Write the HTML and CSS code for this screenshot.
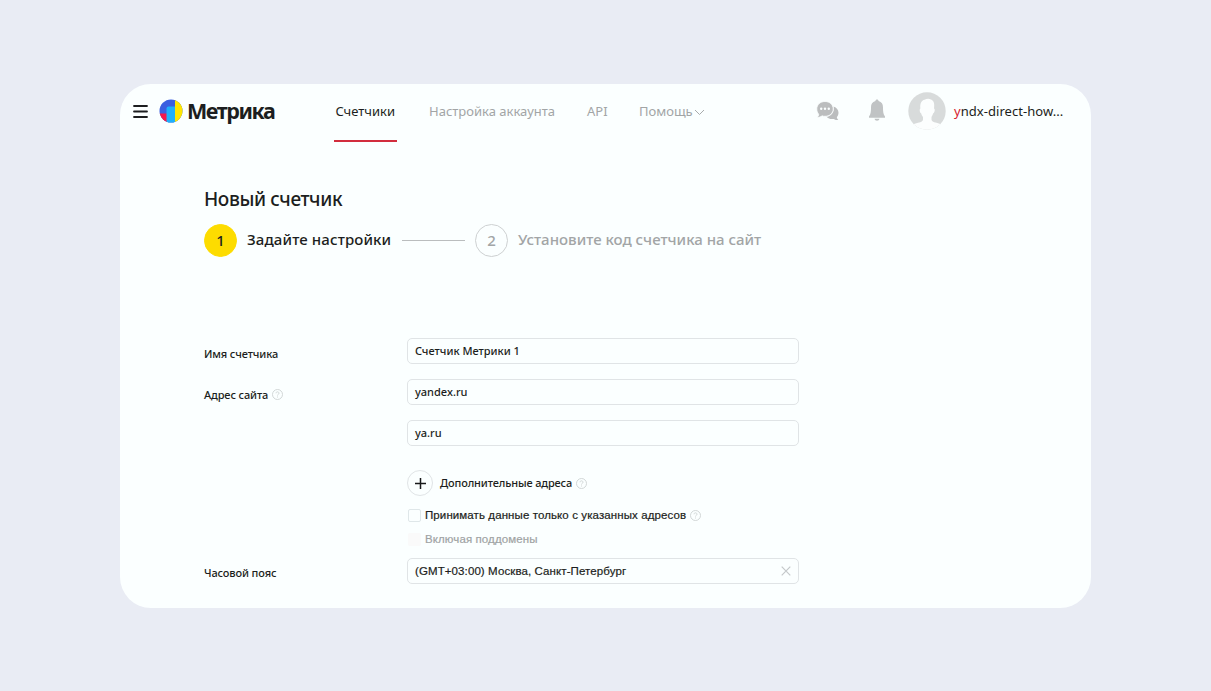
FILE: index.html
```html
<!DOCTYPE html>
<html lang="ru">
<head>
  <meta charset="utf-8">
  <title>Метрика</title>
  <link rel="stylesheet" href="styles.css">
</head>
<body>
  <div class="window">
    <header class="header">
      <svg class="menu" width="15" height="13" viewBox="0 0 15 13" stroke="#1c1e20" stroke-width="1.8" stroke-linecap="round">
        <path d="M1 1h13M1 6.500h13M1 12h13"/>
      </svg>
      <a class="logo">
        <svg width="24" height="24" viewBox="0 0 24 24">
          <defs><clipPath id="disc"><circle cx="12" cy="12" r="11.5"/></clipPath></defs>
          <g clip-path="url(#disc)">
            <rect width="24" height="24" fill="#3b5fe0"/>
            <rect y="14.5" width="8" height="10" fill="#f5174b"/>
            <rect x="16" width="8" height="24" fill="#ffe600"/>
            <path d="M7.500 24V9.500q0-2 2-2H16V24z" fill="#1fb0fb"/>
          </g>
        </svg>
        <span class="logo-text">Метрика</span>
      </a>
      <nav class="nav">
        <a class="nav-item active"><span>Счетчики</span></a>
        <a class="nav-item account"><span>Настройка аккаунта</span></a>
        <a class="nav-item api"><span>API</span></a>
        <a class="nav-item help"><span>Помощь</span>
          <svg width="11" height="7" viewBox="0 0 11 7" fill="none" stroke="#a8abac"><path d="M1 1l4.500 4.500L10 1"/></svg>
        </a>
      </nav>
      <div class="user">
        <svg class="chat" width="24" height="20" viewBox="0 0 24 20" fill="#bbbdbe">
          <path d="M17.500 5.500c3.200 1 5 3.400 5 6.200 0 1.900-.7 3.300-1.700 4.500.2 1.200.7 2.100 1.500 2.900-1.900 0-3.300-.4-4.500-1.200-2.700.5-5.400-.1-7.300-2.100 5-.6 8.200-4.800 7-10.300z"/>
          <path d="M9 .5c4.700 0 8.200 3.200 8.200 7.400s-3.500 7.400-8.200 7.400c-1.100 0-2-.1-2.900-.5-1.300 1-2.900 1.700-5 1.700 1-.9 1.500-2 1.600-3.300C1.400 11.800.8 9.900.8 7.900.8 3.700 4.300.5 9 .5z" stroke="#fbffff" stroke-width=".8"/>
          <g fill="#fbffff"><circle cx="5.200" cy="7.800" r="1.200"/><circle cx="9" cy="7.800" r="1.200"/><circle cx="12.800" cy="7.800" r="1.200"/></g>
        </svg>
        <svg class="bell" width="18" height="23" viewBox="0 0 18 23" fill="#c0c3c4">
          <path d="M9 .5c.9 0 1.500.6 1.600 1.500C13.700 2.800 15 5.200 15 8.200c0 4.400.3 7.200 2 9.400v1.200H1v-1.200C2.700 15.400 3 12.600 3 8.200c0-3 1.300-5.400 4.400-6.200C7.500 1.100 8.100.5 9 .5z"/>
          <path d="M6.500 19.800h5c-.3 1.300-1.200 2-2.500 2s-2.200-.7-2.500-2z"/>
        </svg>
        <svg class="avatar" width="38" height="38" viewBox="0 0 38 38">
          <defs><clipPath id="face"><circle cx="19" cy="19" r="18.700"/></clipPath></defs>
          <g clip-path="url(#face)">
            <rect width="38" height="38" fill="#d8dbdb"/>
            <path d="M0 38c2-3.500 5-6.200 10-7.300 3.500-.9 5-1.600 5-3.300v-2.500c-1-1.200-1.600-2.200-1.900-3.600-.8-.4-1.300-1.500-1.400-2.900 0-1 .2-1.600.7-1.800C11.800 11.500 13.500 8.500 16.500 7.800c2-1 4.300-1.400 6.500-.2 2.800 1 3.800 4 3 9 .6.200.8.900.7 1.800-.2 1.500-.7 2.500-1.500 2.900-.4 1.700-1 2.400-1.700 3.600v2.500c0 1.700 1.500 2.400 5 3.300 4.500 1.100 7.700 3.800 9.500 7.300z" fill="#fcfefe"/>
          </g>
        </svg>
        <span class="login"><b>y</b>ndx-direct-how...</span>
      </div>
    </header>

    <main class="content">
      <h1 class="title"><span>Новый счетчик</span></h1>
      <div class="steps">
        <span class="step-num current">1</span>
        <span class="step-name first">Задайте настройки</span>
        <span class="step-line"></span>
        <span class="step-num">2</span>
        <span class="step-name muted">Установите код счетчика на сайт</span>
      </div>

      <form class="form">
        <div class="row">
          <label class="label name-label">Имя счетчика</label>
          <div class="field name-field">Счетчик Метрики 1</div>
        </div>
        <div class="row">
          <label class="label site-label">Адрес сайта
            <svg class="hint" width="11" height="11" viewBox="0 0 11 11" fill="none" stroke="#cdd2d3" stroke-width=".9"><circle cx="5.500" cy="5.500" r="5"/><path d="M4 4.300c0-2 3-2 3 0 0 1-1.500 1-1.500 2.200M5.500 7.500v1"/></svg>
          </label>
          <div class="field url-field">yandex.ru</div>
        </div>
        <div class="row">
          <span class="label"></span>
          <div class="field ya-field">ya.ru</div>
        </div>
        <div class="extra">
          <span class="plus"><svg width="11" height="11" viewBox="0 0 11 11" stroke="#18191a" stroke-width="1.500"><path d="M5.500 0v11M0 5.500h11"/></svg></span>
          <span class="extra-text">Дополнительные адреса</span>
          <svg class="hint" width="11" height="11" viewBox="0 0 11 11" fill="none" stroke="#cdd2d3" stroke-width=".9"><circle cx="5.500" cy="5.500" r="5"/><path d="M4 4.300c0-2 3-2 3 0 0 1-1.500 1-1.500 2.200M5.500 7.500v1"/></svg>
        </div>
        <div class="check">
          <span class="box"></span>
          <span class="check-text">Принимать данные только с указанных адресов</span>
          <svg class="hint" width="11" height="11" viewBox="0 0 11 11" fill="none" stroke="#cdd2d3" stroke-width=".9"><circle cx="5.500" cy="5.500" r="5"/><path d="M4 4.300c0-2 3-2 3 0 0 1-1.500 1-1.500 2.200M5.500 7.500v1"/></svg>
        </div>
        <div class="check disabled">
          <span class="box"></span>
          <span class="check-text">Включая поддомены</span>
        </div>
        <div class="row zone">
          <label class="label zone-label">Часовой пояс</label>
          <div class="field zone-field"><span>(GMT+03:00) Москва, Санкт-Петербург</span>
            <svg width="10" height="10" viewBox="0 0 10 10" stroke="#c4c8ca" stroke-width="1.200"><path d="M.7.7l8.600 8.600M9.300.7L.7 9.300"/></svg>
          </div>
        </div>
      </form>
    </main>
  </div>
</body>
</html>
```
FILE: styles.css
```css
* { box-sizing: border-box; }
body {
  margin: 0;
  height: 691px;
  padding: 84px 0 0 120px;
  background: #e9ecf4;
  font-family: "Noto Sans", sans-serif;
  color: #1c1e20;
  overflow: hidden;
}
svg { display: block; flex: none; }
.window {
  width: 970.5px;
  height: 524px;
  border-radius: 31px;
  background: #fbffff;
  overflow: hidden;
}

/* top bar */
.header {
  display: flex;
  align-items: flex-start;
  height: 96px;
  padding-left: 13px;
  white-space: nowrap;
}
.menu { margin-top: 21px; }
.logo {
  display: flex;
  width: 175px;
  margin: 15px 0 0 11px;
}
.logo-text {
  margin-left: 4px;
  font: bold 21.5px/24px "Noto Sans", sans-serif;
  letter-spacing: -1.4px;
}
.nav {
  display: flex;
  font-size: 13px;
  line-height: 20px;
  color: #a2a5a6;
}
.nav-item {
  display: flex;
  height: 58px;
  padding-top: 17px;
}
.nav-item.active {
  width: 63px;
  padding-left: 1.5px;
  border-bottom: 2px solid #d22d3d;
  color: #1c1e20;
}
.account { width: 126px; margin-left: 32px; }
.api { width: 20px; margin-left: 32px; }
.help { width: 66px; margin-left: 32px; justify-content: space-between; }
.help svg { margin-top: 8px; }
.user {
  display: flex;
  margin-left: 111px;
}
.chat { margin-top: 17px; }
.bell { margin: 15px 0 0 27.5px; }
.avatar { margin: 8px 0 0 22px; }
.login {
  margin: 17px 0 0 8.5px;
  font-size: 13px;
  line-height: 20px;
  letter-spacing: 0.05px;
}
.login b { font-weight: normal; color: #d8202f; }

/* wizard */
.content { padding-left: 84px; }
.title {
  height: 38px;
  margin: 0;
  padding-top: 4px;
  font-size: 19px;
  font-weight: 500;
  line-height: 30px;
  letter-spacing: -0.4px;
}
.steps {
  display: flex;
  align-items: center;
  height: 44px;
  margin-bottom: 76px;
  font-size: 15px;
  font-weight: 500;
  white-space: nowrap;
}
.step-num {
  width: 33px;
  height: 33px;
  border: 1.5px solid #cdd0d1;
  border-radius: 50%;
  line-height: 30px;
  text-align: center;
  color: #a2a5a6;
}
.step-num.current {
  border-color: #fddc00;
  background: #fddc00;
  color: #1c1e20;
}
.step-name { margin-left: 10px; padding-bottom: 2px; }
.step-name.first { width: 145px; letter-spacing: 0.12px; }
.step-name.muted { color: #a2a5a6; }
.step-line {
  width: 63px;
  height: 1px;
  margin: 0 10px;
  background: #babdbe;
}

/* settings */
.form {
  font-size: 11px;
  font-weight: 500;
  white-space: nowrap;
}
.row {
  display: flex;
  height: 26px;
  margin-bottom: 15px;
}
.label {
  display: flex;
  align-items: center;
  gap: 4px;
  width: 203px;
  padding-top: 4px;
  letter-spacing: -0.13px;
}
.field {
  display: flex;
  align-items: center;
  justify-content: space-between;
  width: 392px;
  height: 26px;
  padding: 0 7px 1px;
  border: 1.5px solid #e0e4e6;
  border-radius: 5px;
}
.extra {
  display: flex;
  align-items: center;
  height: 26px;
  margin: 24px 0 0 203px;
}
.extra-text { padding-bottom: 1px; letter-spacing: -0.14px; }
.plus {
  display: flex;
  align-items: center;
  justify-content: center;
  width: 26px;
  height: 26px;
  margin-right: 7px;
  border: 1px solid #e0e4e6;
  border-radius: 50%;
}
.extra .hint, .check .hint { margin-left: 4px; }
.check .hint { margin-left: 0; }
.check {
  display: flex;
  align-items: center;
  height: 24px;
  margin: 7px 0 0 203px;
  font-family: "Liberation Sans", sans-serif;
  font-size: 11.5px;
  font-weight: normal;
  letter-spacing: 0.1px;
  -webkit-text-stroke: 0.2px;
}
.check-text { width: 265px; }
.box {
  width: 13px;
  height: 13px;
  margin: 0 4px 0 1px;
  border: 1px solid #dfe7e9;
  border-radius: 2px;
}
.check.disabled { margin-top: 0; color: #a0a3a4; }
.disabled .box { border-color: #fafafa; background: #fafafa; }
.zone { margin-top: 7px; }
.zone .label { padding-top: 3px; }
.zone-field {
  padding-bottom: 0;
  font-family: "Liberation Sans", sans-serif;
  font-size: 11.5px;
  letter-spacing: 0.1px;
  -webkit-text-stroke: 0.2px;
}
```
